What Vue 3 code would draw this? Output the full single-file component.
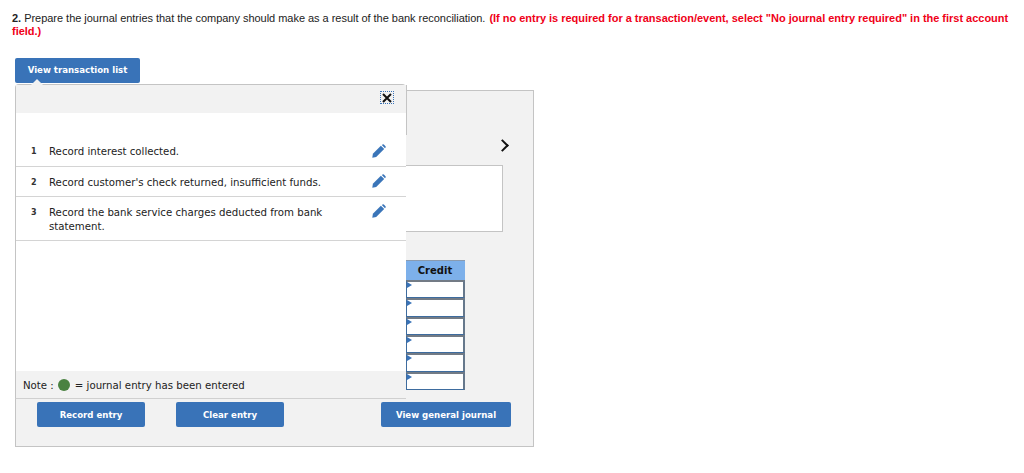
<script setup>
const items = [
  { id: 1, text: 'Record interest collected.' },
  { id: 2, text: "Record customer's check returned, insufficient funds." },
  { id: 3, text: 'Record the bank service charges deducted from bank statement.' }
]
const creditRows = [1, 2, 3, 4, 5, 6]
</script>

<template>
  <div class="page">
    <p class="question">
      <b>2.</b> Prepare the journal entries that the company should make as a result of the bank reconciliation.
      <b class="warn">(If no entry is required for a transaction/event, select "No journal entry required" in the first account field.)</b>
    </p>

    <button class="btn btn-list">View transaction list</button>

    <div class="panel">
      <div class="nav"><span class="chevron"></span></div>
      <div class="white-box"></div>
      <div class="credit">
        <div class="credit-head">Credit</div>
        <div v-for="r in creditRows" :key="r" class="credit-cell"></div>
      </div>
      <div class="actions">
        <div class="actions-left">
          <button class="btn btn-entry">Record entry</button>
          <button class="btn btn-entry">Clear entry</button>
        </div>
        <button class="btn btn-journal">View general journal</button>
      </div>

      <div class="popup">
        <span class="caret"></span>
        <div class="popup-head">
          <span class="close">
            <svg width="10" height="10" viewBox="0 0 10 10">
              <path d="M1 1 L9 9 M9 1 L1 9" stroke="#111" stroke-width="2" fill="none" />
            </svg>
          </span>
        </div>
        <div class="popup-edge"></div>
        <div class="list">
          <div v-for="item in items" :key="item.id" class="row">
            <span class="num">{{ item.id }}</span>
            <span class="text">{{ item.text }}</span>
            <svg class="pencil" width="14" height="14" viewBox="0 0 14 14">
              <path d="M0.3 13.7 L0.9 9.8 L8.9 1.8 L12.2 5.1 L4.2 13.1 Z" fill="#3a75b9" />
              <path d="M9.8 1 L10.6 0.4 Q11.2 0 11.8 0.5 L13.5 2.2 Q14 2.8 13.6 3.4 L13 4.2 Z" fill="#3a75b9" />
            </svg>
          </div>
        </div>
        <div class="note">
          Note :
          <span class="dot"></span>
          = journal entry has been entered
        </div>
      </div>
    </div>
  </div>
</template>

<style scoped>
.page {
  width: 1024px;
  height: 473px;
  box-sizing: border-box;
  padding: 12px 0 0 12px;
  font-family: "DejaVu Sans", sans-serif;
  overflow: hidden;
  background: #fff;
}

.question {
  margin: 0;
  width: 1003px;
  height: 26px;
  font: 11px/12.5px "Liberation Sans", Arial, sans-serif;
  letter-spacing: -0.03px;
  color: #222;
}

.warn {
  margin-left: 1px;
  letter-spacing: -0.02px;
  color: #f00018;
}

.btn {
  display: block;
  border: 0;
  border-radius: 2px;
  background: #3973b8;
  color: #fff;
  font: bold 8.6px "DejaVu Sans", sans-serif;
  padding: 0;
}

.btn-list {
  width: 125px;
  height: 25px;
  margin: 20px 0 0 3px;
  padding-bottom: 1px;
}

.panel {
  position: relative;
  width: 519px;
  height: 357px;
  box-sizing: border-box;
  margin: 7px 0 0 3px;
  border: 1px solid #c4c4c4;
  background: #f2f2f2;
}

.nav {
  height: 74px;
  display: flex;
  justify-content: flex-end;
  align-items: flex-end;
  padding-right: 26px;
}

.chevron {
  width: 7px;
  height: 7px;
  margin-bottom: 15px;
  border-top: 2px solid #111;
  border-right: 2px solid #111;
  transform: rotate(45deg);
}

.white-box {
  width: 298px;
  height: 65px;
  margin-left: 187px;
  border: 1px solid #c4c4c4;
  background: #fff;
}

.credit {
  width: 59px;
  margin: 28px 0 0 390px;
}

.credit-head {
  height: 20px;
  line-height: 19px;
  box-sizing: border-box;
  border-top: 1px solid #8a9bb0;
  padding-right: 1px;
  background: #7db0ea;
  color: #111;
  font-size: 10px;
  font-weight: bold;
  text-align: center;
}

.credit-cell {
  position: relative;
  height: 18.33px;
  box-sizing: border-box;
  border: 1px solid #3e6c9f;
  border-top: 2px solid #737b85;
  border-right: 2px solid #66788c;
  background: #fff;
}

.credit-cell::before {
  content: '';
  position: absolute;
  top: 0;
  left: 0;
  border-left: 5px solid #3973b8;
  border-top: 3px solid transparent;
  border-bottom: 3px solid transparent;
}

.actions {
  display: flex;
  justify-content: space-between;
  margin: 12px 22px 0 21px;
}

.actions-left {
  display: flex;
  gap: 31px;
}

.btn-entry {
  width: 108px;
  height: 25px;
  padding-top: 2px;
}

.btn-journal {
  width: 130px;
  height: 25px;
  padding-top: 2px;
}

.popup {
  position: absolute;
  top: -7px;
  left: -1px;
  width: 391px;
  height: 315px;
  box-sizing: border-box;
  border-radius: 4px 4px 0 0;
  border-left: 1px solid #c4c4c4;
  border-top: 1px solid #c4c4c4;
  background: #fff;
  display: flex;
  flex-direction: column;
  border-bottom: 1px solid #d0d0d0;
}

.caret {
  position: absolute;
  top: -6px;
  left: 15px;
  border-left: 6px solid transparent;
  border-right: 6px solid transparent;
  border-bottom: 6px solid #f2f2f2;
}

.popup-head {
  height: 28px;
  flex: none;
  box-sizing: border-box;
  padding: 6px 12px 0 0;
  display: flex;
  justify-content: flex-end;
  align-items: flex-start;
  background: #f2f2f2;
}

.close {
  width: 14px;
  height: 13px;
  display: flex;
  align-items: center;
  justify-content: center;
  outline: 1px dotted #3973b8;
  outline-offset: -1px;
}

.popup-edge {
  position: absolute;
  top: 0;
  right: -1px;
  width: 1px;
  height: 50px;
  background: #c4c4c4;
}

.list {
  flex: 1;
  padding-top: 24px;
}

.row {
  display: flex;
  align-items: flex-start;
  position: relative;
  padding: 9px 64px 7px 15px;
  font-size: 10.2px;
  line-height: 14px;
  color: #222;
  border-bottom: 1px solid #d4d4d4;
  box-sizing: border-box;
}

.row:first-child {
  height: 30px;
  padding-top: 8px;
}

.row:nth-child(2) {
  height: 30px;
}

.row:nth-child(3) {
  height: 44px;
}

.num {
  width: 18px;
  flex: none;
  font-size: 8px;
  font-weight: bold;
  color: #333;
}

.text {
  flex: 1;
}

.pencil {
  position: absolute;
  top: 7px;
  right: 20px;
}

.note {
  height: 27px;
  flex: none;
  box-sizing: border-box;
  display: flex;
  align-items: center;
  gap: 4.5px;
  padding: 1px 0 0 7px;
  background: #f2f2f2;
  font-size: 10.2px;
  color: #222;
}

.dot {
  width: 12px;
  height: 12px;
  border-radius: 50%;
  background: #4a8241;
}
</style>
